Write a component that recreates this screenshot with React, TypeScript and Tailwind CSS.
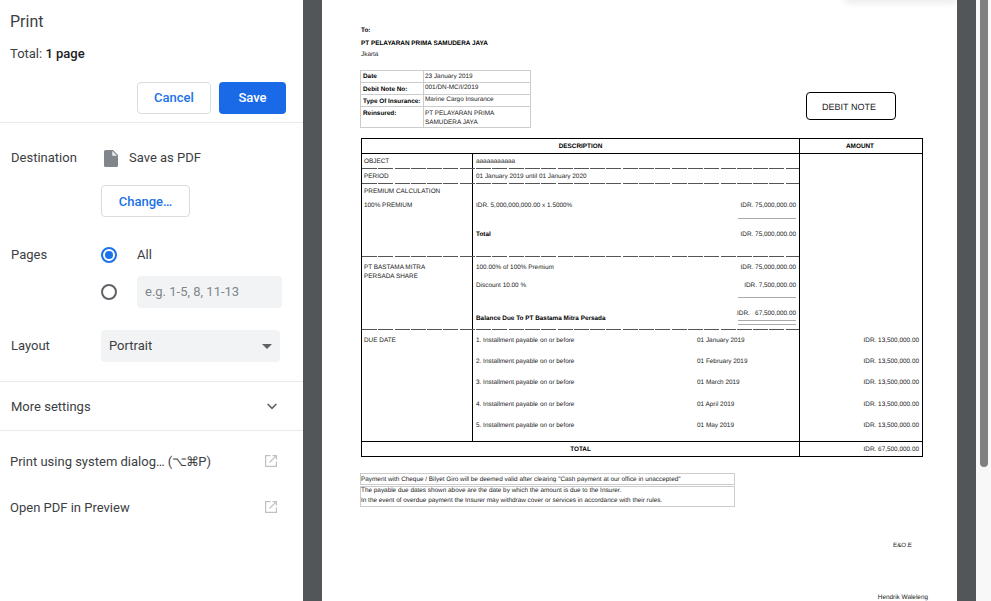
const sans = "font-['Roboto',sans-serif]";

function DashLine() {
  return <div className="h-px w-full bg-[repeating-linear-gradient(90deg,#555555_0,#555555_15px,#ffffff_15px,#ffffff_16.3px)]" />;
}

function ExternalIcon() {
  return (
    <svg className="mb-[4px]" width="12" height="12" viewBox="0 0 12 12" fill="none" stroke="#bdc1c6" strokeWidth="1.2">
      <path d="M5.5.6H.6v10.8h10.8V6.5" />
      <path d="M4.5 7.5 11.4.6M7.5.6h3.9v3.9" />
    </svg>
  );
}

function Radio({ on }: { on?: boolean }) {
  return (
    <div className={`flex h-4 w-4 items-center justify-center rounded-full border-2 ${on ? "border-[#1a73e8]" : "border-[#5f6368]"}`}>
      {on && <div className="h-2 w-2 rounded-full bg-[#1a73e8]" />}
    </div>
  );
}

function Sidebar() {
  return (
    <div className={`flex h-[601px] w-[303px] shrink-0 flex-col bg-white text-[#202124] ${sans}`}>
      <div className="h-[123px] shrink-0 border-b border-[#e8eaed] pl-[10px] pr-[17px]">
        <div className="pt-[12px] text-[16px] leading-[20px] text-[#3c4043]">Print</div>
        <div className="mt-[13px] text-[13px] leading-[18px]">
          <span className="text-[#3c4043]">Total: </span>
          <span className="font-medium">1 page</span>
        </div>
        <div className="mt-[19px] flex justify-end gap-2">
          <button className="h-[32px] w-[74px] rounded-[4px] border border-[#dadce0] bg-white text-[13px] font-medium text-[#1a73e8]">Cancel</button>
          <button className="h-[32px] w-[67px] rounded-[4px] bg-[#1a6ae8] text-[13px] font-medium text-white">Save</button>
        </div>
      </div>

      <div className="flex h-[259px] shrink-0 flex-col border-b border-[#e8eaed] text-[13px] text-[#3c4043]">
        <div className="mt-[26px] flex h-[18px] items-center pl-[11px]">
          <div className="w-[90px]">Destination</div>
          <svg className="ml-[3px]" width="14" height="17" viewBox="0 0 14 17"><path d="M1.5 0H9l5 5v10.5a1.5 1.5 0 0 1-1.5 1.5h-11A1.5 1.5 0 0 1 0 15.5v-14A1.5 1.5 0 0 1 1.5 0Z" fill="#80868b" /><path d="M8.3 1v4.7H13Z" fill="#f1f3f4" /></svg>
          <div className="ml-[11px]">Save as PDF</div>
        </div>
        <button className="ml-[101px] mt-[18px] h-[32px] w-[89px] rounded-[4px] border border-[#dadce0] bg-white pt-px text-[13px] font-medium text-[#1a73e8]">Change…</button>
        <div className="mt-[29px] flex h-[18px] items-center pl-[11px]">
          <div className="w-[90px]">Pages</div>
          <Radio on />
          <div className="ml-[20px]">All</div>
        </div>
        <div className="mt-[12px] flex h-[32px] items-center pl-[101px]">
          <Radio />
          <div className="ml-[20px] flex h-[32px] w-[145px] items-center rounded-[4px] bg-[#f1f3f4] pl-[8px] text-[#80868b]">e.g. 1-5, 8, 11-13</div>
        </div>
        <div className="mt-[22px] flex h-[32px] items-center pl-[11px]">
          <div className="w-[90px]">Layout</div>
          <div className="flex h-[32px] w-[179px] items-center justify-between rounded-[4px] bg-[#f1f3f4] pl-[8px] pr-[8px]">
            Portrait
            <svg width="10" height="5" viewBox="0 0 10 5"><path d="M0 0h10L5 5Z" fill="#5f6368" /></svg>
          </div>
        </div>
      </div>

      <div className="flex h-[49px] shrink-0 items-center justify-between border-b border-[#e8eaed] pl-[11px] pr-[26px] pt-px text-[13px] text-[#3c4043]">
        More settings
        <svg width="10" height="7" viewBox="0 0 10 7" fill="none" stroke="#5f6368" strokeWidth="1.7"><path d="M.7 1 5 5.3 9.3 1" /></svg>
      </div>

      <div className="flex h-[46px] shrink-0 items-end justify-between pb-[6px] pl-[10px] pr-[26px] text-[13px] text-[#3c4043]">
        <span>Print using system dialog… (<span className="tracking-[-1px]">⌥⌘</span>P)</span>
        <ExternalIcon />
      </div>
      <div className="flex h-[46px] shrink-0 items-end justify-between pb-[6px] pl-[10px] pr-[26px] text-[13px] text-[#3c4043]">
        <span>Open PDF in Preview</span>
        <ExternalIcon />
      </div>
    </div>
  );
}

const meta = [
  ["Date", "23 January 2019", "h-[11px]", "pt-[1px]", "pt-[1px]"],
  ["Debit Note No:", "001/DN-MC/I/2019", "h-[12px]", "pt-[2px]", "pt-0"],
  ["Type Of Insurance:", "Marine Cargo Insurance", "h-[12px]", "pt-[2px]", "pt-0"],
  ["Reinsured:", "PT PELAYARAN PRIMA SAMUDERA JAYA", "h-[21px]", "pt-[2px]", "pt-[2px]"],
];

const dues = [
  ["1. Installment payable on or before", "01 January 2019", "h-[21px]"],
  ["2. Installment payable on or before", "01 February 2019", "h-[21px]"],
  ["3. Installment payable on or before", "01 March 2019", "h-[22px]"],
  ["4. Installment payable on or before", "01 April 2019", "h-[21px]"],
  ["5. Installment payable on or before", "01 May 2019", "h-[21px]"],
];

function MoneyLine({ className = "" }: { className?: string }) {
  return <div className={`ml-auto mr-[3px] h-px w-[58px] bg-[#aaaaaa] ${className}`} />;
}

function Row2({ left, right, className = "" }: { left: React.ReactNode; right?: React.ReactNode; className?: string }) {
  return (
    <div className={`flex justify-between pl-[3px] pr-[3px] leading-[9px] ${className}`}>
      <span>{left}</span>
      <span>{right}</span>
    </div>
  );
}

function DebitTable() {
  return (
    <div className="flex h-[319px] w-[562px] border border-black text-[6.4px] leading-[9px] text-[#222]">
      <div className="flex w-[437px] shrink-0 flex-col">
        <div className="flex h-[15px] shrink-0 items-center justify-center border-b border-black font-bold text-black">DESCRIPTION</div>
        <div className="flex flex-1 flex-col">
          <div className="grid h-[14px] grid-cols-[111px_326px]">
            <div className="border-r border-black pl-[2px] pt-[3px]">OBJECT</div>
            <div className="pl-[3px] pt-[3px]">aaaaaaaaaaa</div>
          </div>
          <DashLine />
          <div className="grid h-[14px] grid-cols-[111px_326px]">
            <div className="border-r border-black pl-[2px] pt-[3px]">PERIOD</div>
            <div className="pl-[3px] pt-[3px]">01 January 2019 until 01 January 2020</div>
          </div>
          <DashLine />
          <div className="grid h-[72px] grid-cols-[111px_326px]">
            <div className="border-r border-black pl-[2px] pt-[3px]">
              <div>PREMIUM CALCULATION</div>
              <div className="mt-[5px]">100% PREMIUM</div>
            </div>
            <div className="pt-[17px]">
              <Row2 left="IDR. 5,000,000,000.00 x 1.5000%" right="IDR. 75,000,000.00" />
              <MoneyLine className="mt-[8px]" />
              <Row2 left={<b className="text-black">Total</b>} right="IDR. 75,000,000.00" className="mt-[11px]" />
            </div>
          </div>
          <DashLine />
          <div className="grid h-[72px] grid-cols-[111px_326px]">
            <div className="border-r border-black pl-[2px] pt-[6px]">
              <div>PT BASTAMA MITRA</div>
              <div>PERSADA SHARE</div>
            </div>
            <div className="pt-[6px]">
              <Row2 left="100.00% of 100% Premium" right="IDR. 75,000,000.00" />
              <Row2 left="Discount 10.00 %" right="IDR. 7,500,000.00" className="mt-[9px]" />
              <MoneyLine className="mt-[7px]" />
              <div className="mt-[11px] flex justify-between pl-[3px] pr-[3px]">
                <b className="pt-[5px] text-black">Balance Due To PT Bastama Mitra Persada</b>
                <span>IDR.&nbsp;&nbsp; 67,500,000.00</span>
              </div>
              <MoneyLine className="-mt-[3px]" />
              <MoneyLine className="mt-[3px]" />
            </div>
          </div>
          <DashLine />
          <div className="grid h-[111px] grid-cols-[111px_326px]">
            <div className="border-r border-black pl-[2px] pt-[6px]">DUE DATE</div>
            <div className="pt-[6px]">
              {dues.map(([a, b, h]) => (
                <div key={a} className={`grid grid-cols-[221px_1fr] pl-[3px] ${h}`}>
                  <span>{a}</span>
                  <span>{b}</span>
                </div>
              ))}
            </div>
          </div>
        </div>
        <div className="flex h-[15px] shrink-0 items-center justify-center border-t border-black font-bold text-black">TOTAL</div>
      </div>
      <div className="flex flex-1 flex-col border-l border-black">
        <div className="flex h-[15px] shrink-0 items-center justify-center border-b border-black pr-[2px] font-bold text-black">AMOUNT</div>
        <div className="h-[287px] pr-[3px] pt-[182px] text-right">
          {dues.map(([a, , h]) => (
            <div key={a} className={h}>IDR. 13,500,000.00</div>
          ))}
        </div>
        <div className="flex h-[15px] shrink-0 items-center justify-end border-t border-black pr-[3px]">IDR. 67,500,000.00</div>
      </div>
    </div>
  );
}

function Page() {
  return (
    <div className="relative ml-[19px] h-[601px] w-[635px] shrink-0 overflow-hidden bg-white pl-[39px] font-['Liberation_Sans',sans-serif] text-[#222] [text-rendering:geometricPrecision]">
      <div className="absolute right-0 top-[-12px] h-[12px] w-[112px] shadow-[0_2px_8px_rgba(0,0,0,0.10)]" />
      <div className="flex h-[138px] w-[562px] justify-between">
        <div>
          <div className="pt-[27px] text-[6.4px] font-bold leading-[8px] text-black">To:</div>
          <div className="mt-[5px] text-[6.4px] font-bold leading-[8px] text-black">PT PELAYARAN PRIMA SAMUDERA JAYA</div>
          <div className="mt-[2px] text-[6.4px] leading-[9px]">Jkarta</div>
          <div className="-ml-px mt-[11px] w-[171px] border border-[#cccccc] text-[6.4px] leading-[9px]">
            {meta.map(([k, v, h, pk, pv], i) => (
              <div key={k} className={`flex ${h} ${i ? "border-t border-[#cccccc]" : ""}`}>
                <div className={`w-[63px] shrink-0 border-r border-[#cccccc] pl-[2px] font-bold text-black ${pk}`}>{k}</div>
                <div className={`pl-[1px] pr-[20px] ${pv}`}>{v}</div>
              </div>
            ))}
          </div>
        </div>
        <div className="mb-[18px] mr-[27px] flex h-[28px] w-[90px] items-center justify-center self-end rounded-[4px] border border-black pr-[4px] pt-[3px] text-[9px] text-[#222]">DEBIT NOTE</div>
      </div>

      <DebitTable />

      <div className="-ml-px mt-[16px] flex h-[12px] w-[375px] items-center border border-[#cccccc] pt-px text-[6.4px] leading-[10px]">Payment with Cheque / Bilyet Giro will be deemed valid after clearing "Cash payment at our office in unaccepted"</div>
      <div className="-ml-px mt-[1px] h-[21px] w-[375px] border border-[#cccccc] text-[6.4px] leading-[10px]">
        <div className="-mt-[1px]">The payable due dates shown above are the date by which the amount is due to the Insurer.</div>
        <div>In the event of overdue payment the Insurer may withdraw cover or services in accordance with their rules.</div>
      </div>

      <div className="mt-[34px] w-[551px] text-right text-[6.2px] leading-[9px]">E&amp;O.E</div>
      <div className="mt-[43px] w-[567px] text-right text-[6.4px] leading-[9px]">Hendrik Waleleng</div>
    </div>
  );
}

export default function App() {
  return (
    <div className="flex h-[601px] w-[991px] overflow-hidden bg-[#525659]">
      <Sidebar />
      <Page />
      <div className="ml-[19px] flex h-[601px] flex-1 justify-center bg-[#f8f8f8] pl-[1px]">
        <div className="h-[467px] w-[8px] rounded-b-[4px] bg-[#7f7f7f]" />
      </div>
    </div>
  );
}
